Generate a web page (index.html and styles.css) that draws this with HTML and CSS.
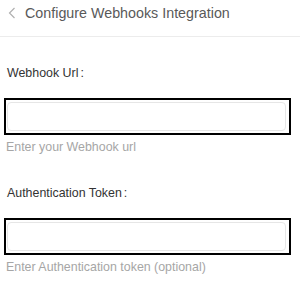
FILE: index.html
```html
<!DOCTYPE html>
<html>
<head>
  <title>Configure Webhooks Integration</title>
  <link rel="stylesheet" href="styles.css">
</head>
<body>
  <div class="header">
    <span class="back">
      <svg width="8" height="12" viewBox="0 0 8 12"><path d="M6.5 1 L1.5 6 L6.5 11" fill="none" stroke="#b0b0b0" stroke-width="1.2"/></svg>
    </span>
    <span class="title">Configure Webhooks Integration</span>
  </div>

  <div class="form">
    <div class="field">
      <label class="label">Webhook Url<span class="colon">:</span></label>
      <div class="input-frame"><input class="input" type="text"></div>
      <div class="hint">Enter your Webhook url</div>
    </div>
    <div class="field">
      <label class="label">Authentication Token<span class="colon">:</span></label>
      <div class="input-frame"><input class="input" type="text"></div>
      <div class="hint">Enter Authentication token (optional)</div>
    </div>
  </div>
</body>
</html>
```

FILE: styles.css
```css
body {
  margin: 0;
  padding: 0;
  background-color: #ffffff;
  font-family: "Liberation Sans", Arial, sans-serif;
}

.header {
  display: flex;
  align-items: center;
  height: 36px;
  padding: 0 8px;
  border-bottom: 1px solid #ececec;
}

.back {
  display: flex;
  align-items: center;
  width: 17px;
  margin-top: -11px;
}

.title {
  font-size: 14.3px;
  line-height: 18px;
  color: #595959;
  margin-top: -11px;
}

.form {
  padding: 29px 9px 0 4px;
}

.field {
  margin-bottom: 31px;
}

.label {
  display: block;
  font-size: 12.4px;
  line-height: 15px;
  color: #333333;
  padding-left: 3px;
  margin-bottom: 17px;
}

.colon {
  margin-left: 2px;
}

.input-frame {
  border: 2px solid #000000;
  padding: 2px 3px 2px 1px;
}

.input {
  display: block;
  box-sizing: border-box;
  width: 100%;
  height: 29px;
  border: 1px solid #e6e6e6;
  border-radius: 4px;
  outline: none;
}

.hint {
  font-size: 12.4px;
  line-height: 15px;
  color: #a6a6a6;
  padding-left: 2px;
  margin-top: 5px;
}
```
